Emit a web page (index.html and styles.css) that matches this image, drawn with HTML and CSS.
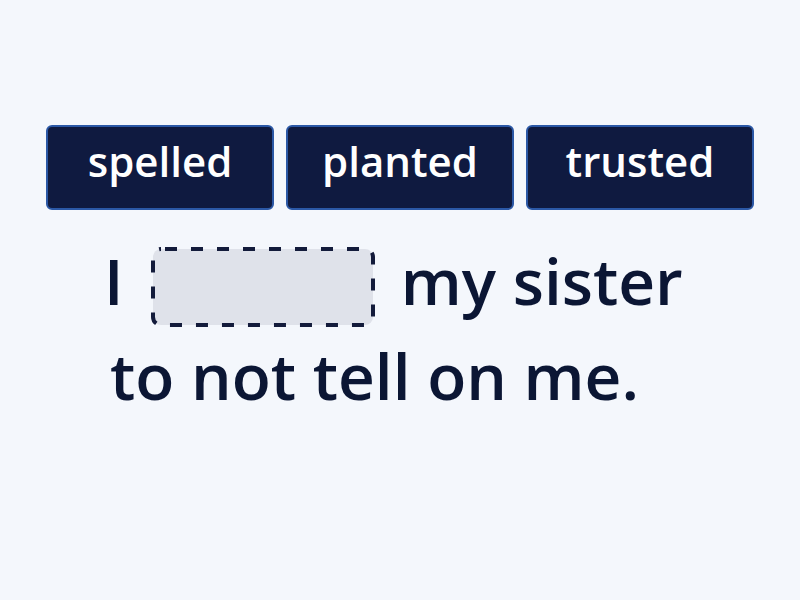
FILE: index.html
```html
<!DOCTYPE html>
<html>
<head>
<meta charset="utf-8">
<link rel="stylesheet" href="styles.css">
</head>
<body>
<div class="page">
  <div class="choices">
    <div class="choice">spelled</div>
    <div class="choice">planted</div>
    <div class="choice">trusted</div>
  </div>
  <p class="sentence">I <span class="blank"><svg class="blank-frame" width="224" height="80" viewBox="0 0 224 80"><rect x="2" y="2" width="220" height="76" rx="8" ry="8" fill="#dfe2ea" stroke="#131b3b" stroke-width="4" stroke-dasharray="12 14" stroke-dashoffset="-4"/></svg></span> my sister to not tell on me.</p>
</div>
</body>
</html>
```
FILE: styles.css
```css
html, body {
  margin: 0;
  padding: 0;
  background: #f4f7fc;
}
.page {
  width: 800px;
  height: 600px;
  box-sizing: border-box;
  padding-top: 125px;
  font-family: "Open Sans", "Noto Sans", sans-serif;
}
.choices {
  display: flex;
  gap: 12px;
  padding-left: 46px;
}
.choice {
  width: 228px;
  height: 85px;
  box-sizing: border-box;
  border: 2px solid #2b58a6;
  border-radius: 6px;
  background: #0f1a40;
  color: #ffffff;
  font-weight: 600;
  font-size: 42px;
  line-height: 1;
  padding-bottom: 14px;
  display: flex;
  align-items: center;
  justify-content: center;
}
.sentence {
  margin: 23px 0 0 110px;
  text-indent: -6px;
  width: 620px;
  font-size: 64px;
  font-weight: 600;
  line-height: 95px;
  color: #0b1634;
}
.blank {
  display: inline-block;
  width: 224px;
  height: 80px;
  vertical-align: -22px;
  margin: 0 9px 0 11px;
  text-indent: 0;
}
.blank-frame {
  display: block;
}
```
